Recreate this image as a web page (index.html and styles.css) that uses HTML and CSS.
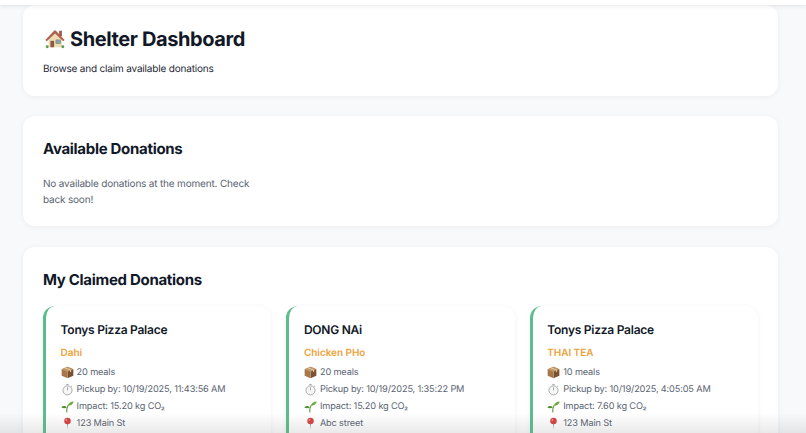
FILE: index.html
```html
<!DOCTYPE html>
<html lang="en">
<head>
    <meta charset="UTF-8">
    <title>Shelter Dashboard</title>
    <link rel="stylesheet" href="styles.css">
</head>
<body>
    <div class="top-shade"></div>

    <main class="container">
        <section class="panel panel-header">
            <h1>
                <svg class="house-icon" viewBox="0 0 24 24">
                    <rect x="16.5" y="3" width="3" height="6" fill="#9a5a48"/>
                    <path d="M5 12 L12 5 L19.5 12 V21 H5 Z" fill="#efdcb6"/>
                    <path d="M1.5 13 L11 3 Q12 2 13 3 L22.5 13 L21 14.5 L12 6 L3 14.5 Z" fill="#b0604e"/>
                    <rect x="7" y="14" width="4" height="7" fill="#8a5a3c"/>
                    <rect x="13" y="13" width="5" height="4" fill="#7fa8b8" stroke="#8d7b60" stroke-width=".6"/>
                    <circle cx="3.5" cy="20.5" r="1.6" fill="#5f9a4a"/>
                    <circle cx="20.5" cy="20.5" r="1.6" fill="#5f9a4a"/>
                </svg>
                Shelter Dashboard
            </h1>
            <p class="subtitle">Browse and claim available donations</p>
        </section>

        <section class="panel panel-available">
            <h2>Available Donations</h2>
            <div class="donation-grid">
                <p class="empty">No available donations at the moment. Check back soon!</p>
            </div>
        </section>

        <section class="panel">
            <h2>My Claimed Donations</h2>
            <div class="donation-grid">
                <article class="donation">
                    <h3>Tonys Pizza Palace</h3>
                    <div class="food">Dahi</div>
                    <div class="info">
                        <svg class="icon"><use href="#i-box"/></svg>20 meals
                    </div>
                    <div class="info">
                        <svg class="icon"><use href="#i-timer"/></svg>Pickup by: 10/19/2025, 11:43:56 AM
                    </div>
                    <div class="info">
                        <svg class="icon"><use href="#i-sprout"/></svg>Impact: 15.20 kg CO₂
                    </div>
                    <div class="info">
                        <svg class="icon"><use href="#i-pin"/></svg>123 Main St
                    </div>
                </article>

                <article class="donation">
                    <h3>DONG NAi</h3>
                    <div class="food">Chicken PHo</div>
                    <div class="info">
                        <svg class="icon"><use href="#i-box"/></svg>20 meals
                    </div>
                    <div class="info">
                        <svg class="icon"><use href="#i-timer"/></svg>Pickup by: 10/19/2025, 1:35:22 PM
                    </div>
                    <div class="info">
                        <svg class="icon"><use href="#i-sprout"/></svg>Impact: 15.20 kg CO₂
                    </div>
                    <div class="info">
                        <svg class="icon"><use href="#i-pin"/></svg>Abc street
                    </div>
                </article>

                <article class="donation">
                    <h3>Tonys Pizza Palace</h3>
                    <div class="food">THAI TEA</div>
                    <div class="info">
                        <svg class="icon"><use href="#i-box"/></svg>10 meals
                    </div>
                    <div class="info">
                        <svg class="icon"><use href="#i-timer"/></svg>Pickup by: 10/19/2025, 4:05:05 AM
                    </div>
                    <div class="info">
                        <svg class="icon"><use href="#i-sprout"/></svg>Impact: 7.60 kg CO₂
                    </div>
                    <div class="info">
                        <svg class="icon"><use href="#i-pin"/></svg>123 Main St
                    </div>
                </article>
            </div>
        </section>
    </main>

    <div class="bottom-shade"></div>

    <svg class="sprites">
        <symbol id="i-box" viewBox="0 0 12 12">
            <path d="M6 .8 L11.4 3 V9 L6 11.4 Z" fill="#7a5230"/>
            <path d="M6 .8 L.6 3 V9 L6 11.4 Z" fill="#a5774a"/>
            <path d="M.6 3 L6 .8 L11.4 3 L6 5.2 Z" fill="#c29a6b"/>
            <path d="M3 1.8 L8.4 4 V5.8 L9.4 5.4 V3.6 L4 1.4 Z" fill="#e3cfa8"/>
        </symbol>
        <symbol id="i-timer" viewBox="0 0 12 12">
            <rect x="5" y=".8" width="2" height="1.1" fill="#a3a7ab"/>
            <circle cx="6" cy="6.8" r="4.2" fill="#f6f6f4" stroke="#a3a7ab" stroke-width=".9"/>
            <path d="M6 6.8 L6 4" stroke="#7c8186" stroke-width=".6"/>
            <path d="M9.3 2.6 L10.2 3.5" stroke="#a3a7ab" stroke-width=".9"/>
        </symbol>
        <symbol id="i-sprout" viewBox="0 0 12 12">
            <path d="M5.4 11.5 Q5 7.5 6.5 5" stroke="#5c9a3a" stroke-width="1" fill="none"/>
            <path d="M6 5.5 Q7.5 1.5 11.8 1.4 Q10.8 5.2 6 5.5 Z" fill="#6ba93f"/>
            <path d="M5.5 6.6 Q3 4.6 .2 6.6 Q3 8.4 5.5 6.6 Z" fill="#4f8a2e"/>
        </symbol>
        <symbol id="i-pin" viewBox="0 0 12 12">
            <path d="M5.5 6 L6 11.8 L6.5 6 Z" fill="#9a9a9a"/>
            <circle cx="6" cy="3.6" r="3" fill="#d8413f"/>
            <circle cx="5" cy="2.7" r=".8" fill="#f0a0a0"/>
        </symbol>
    </svg>
</body>
</html>
```

FILE: styles.css
```css
* {
    box-sizing: border-box;
}
html, body {
    height: 100%;
    overflow: hidden;
}
body {
    margin: 0;
    font-family: Inter, "Liberation Sans", sans-serif;
    background-color: #f8f9fb;
    color: #111827;
    text-rendering: geometricPrecision;
}
.container {
    padding: 5px 28px 0 23px;
}
.panel {
    background-color: #fff;
    border-radius: 12px;
    padding: 20px;
    margin-bottom: 20px;
    box-shadow: 0 1px 6px rgba(0, 0, 0, 0.05);
}
.panel-header {
    height: 91px;
}
.panel-available {
    height: 110px;
    margin-bottom: 21px;
}
h1 {
    display: flex;
    align-items: center;
    gap: 4px;
    margin: 0;
    font-size: 20px;
    line-height: 28px;
    font-weight: 700;
    letter-spacing: -0.4px;
}
.house-icon {
    width: 22px;
    height: 22px;
    margin-left: 1px;
}
.subtitle {
    margin: 8px 0 0;
    font-size: 10px;
    line-height: 16px;
    letter-spacing: -0.18px;
    color: #1f2937;
}
h2 {
    margin: 0 0 13px;
    font-size: 15px;
    line-height: 26px;
    font-weight: 700;
    letter-spacing: -0.3px;
}
.donation-grid {
    display: grid;
    grid-template-columns: repeat(3, 1fr);
    gap: 15px;
}
.empty {
    margin: 1px 0 0;
    font-size: 10px;
    line-height: 16px;
    letter-spacing: -0.18px;
    color: #5b6472;
}
.donation {
    background-color: #fff;
    border-left: 3px solid #5bbd8c;
    border-radius: 12px;
    padding: 15px 15px 15px 14.6px;
    box-shadow: 0 1px 5px rgba(0, 0, 0, 0.06);
    height: 170px;
}
h3 {
    margin: 0 0 6px;
    font-size: 12px;
    line-height: 18px;
    font-weight: 600;
    letter-spacing: -0.25px;
}
.food {
    font-size: 10px;
    line-height: 16px;
    font-weight: 600;
    letter-spacing: -0.05px;
    color: #eda33b;
    margin-bottom: 3px;
}
.info {
    display: flex;
    align-items: center;
    gap: 3px;
    height: 17px;
    font-size: 9.2px;
    letter-spacing: -0.15px;
    color: #5b6472;
}
.icon {
    width: 13px;
    height: 13px;
    flex-shrink: 0;
}
.sprites {
    display: none;
}
.top-shade {
    position: absolute;
    top: 0;
    left: 0;
    right: 0;
    height: 5px;
    background-color: #fff;
    box-shadow: 0 1px 4px rgba(0, 0, 0, 0.1);
    z-index: 2;
}
.bottom-shade {
    position: absolute;
    bottom: 0;
    left: 0;
    right: 0;
    height: 20px;
    background: linear-gradient(to bottom, rgba(120, 120, 120, 0), rgba(120, 120, 120, 0.16));
    z-index: 2;
}
```
